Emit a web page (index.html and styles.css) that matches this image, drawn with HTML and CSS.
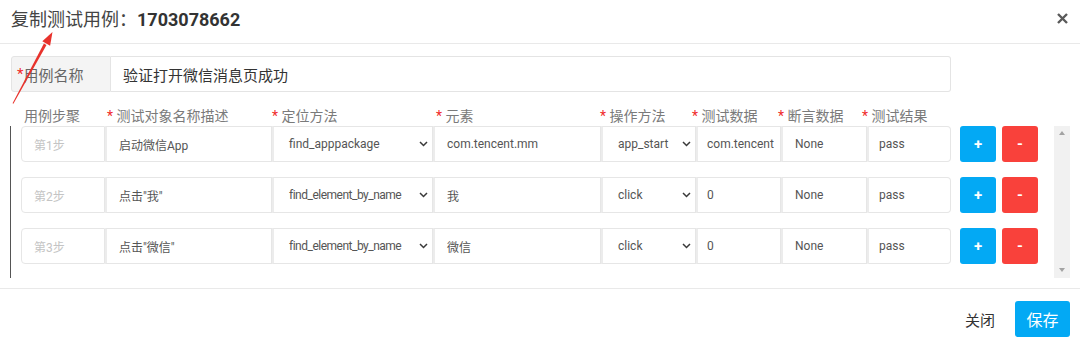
FILE: index.html
```html
<!DOCTYPE html>
<html lang="zh-CN">
<head>
    <meta charset="UTF-8">
    <meta name="viewport" content="width=device-width, initial-scale=1.0">
    <title>复制测试用例</title>
    <link rel="stylesheet" href="styles.css">
</head>
<body>
    <div class="modal">
        <div class="modal-header">
            <h4 class="modal-title">复制测试用例：<b>1703078662</b></h4>
            <button class="close" type="button">
                <svg width="11" height="11" viewBox="0 0 11 11" stroke="currentColor" stroke-width="2.4" stroke-linecap="butt">
                    <path d="M1 1L10 10M10 1L1 10"></path>
                </svg>
            </button>
        </div>

        <div class="modal-body">
            <div class="name-group">
                <span class="addon"><i class="req">*</i>用例名称</span>
                <div class="name-input">验证打开微信消息页成功</div>
            </div>

            <div class="step-labels">
                <span>用例步聚</span>
                <span><i class="req">*</i> 测试对象名称描述</span>
                <span><i class="req">*</i> 定位方法</span>
                <span><i class="req">*</i> 元素</span>
                <span><i class="req">*</i> 操作方法</span>
                <span><i class="req">*</i> 测试数据</span>
                <span><i class="req">*</i> 断言数据</span>
                <span><i class="req">*</i> 测试结果</span>
            </div>

            <div class="steps-wrap">
                <div class="steps">
                    <div class="step-row">
                        <div class="cells">
                            <div class="cell step-no">第1步</div>
                            <div class="cell">启动微信App</div>
                            <div class="cell select"><span>find_apppackage</span><svg class="chevron" width="9" height="6" viewBox="0 0 9 6"><path d="M1 1L4.5 4.5L8 1"></path></svg></div>
                            <div class="cell">com.tencent.mm</div>
                            <div class="cell select"><span>app_start</span><svg class="chevron" width="9" height="6" viewBox="0 0 9 6"><path d="M1 1L4.5 4.5L8 1"></path></svg></div>
                            <div class="cell data">com.tencent</div>
                            <div class="cell">None</div>
                            <div class="cell last">pass</div>
                        </div>
                        <button class="btn btn-add" type="button">+</button>
                        <button class="btn btn-del" type="button">-</button>
                    </div>
                    <div class="step-row">
                        <div class="cells">
                            <div class="cell step-no">第2步</div>
                            <div class="cell">点击"我"</div>
                            <div class="cell select"><span class="long">find_element_by_name</span><svg class="chevron" width="9" height="6" viewBox="0 0 9 6"><path d="M1 1L4.5 4.5L8 1"></path></svg></div>
                            <div class="cell">我</div>
                            <div class="cell select"><span>click</span><svg class="chevron" width="9" height="6" viewBox="0 0 9 6"><path d="M1 1L4.5 4.5L8 1"></path></svg></div>
                            <div class="cell data">0</div>
                            <div class="cell">None</div>
                            <div class="cell last">pass</div>
                        </div>
                        <button class="btn btn-add" type="button">+</button>
                        <button class="btn btn-del" type="button">-</button>
                    </div>
                    <div class="step-row">
                        <div class="cells">
                            <div class="cell step-no">第3步</div>
                            <div class="cell">点击"微信"</div>
                            <div class="cell select"><span class="long">find_element_by_name</span><svg class="chevron" width="9" height="6" viewBox="0 0 9 6"><path d="M1 1L4.5 4.5L8 1"></path></svg></div>
                            <div class="cell">微信</div>
                            <div class="cell select"><span>click</span><svg class="chevron" width="9" height="6" viewBox="0 0 9 6"><path d="M1 1L4.5 4.5L8 1"></path></svg></div>
                            <div class="cell data">0</div>
                            <div class="cell">None</div>
                            <div class="cell last">pass</div>
                        </div>
                        <button class="btn btn-add" type="button">+</button>
                        <button class="btn btn-del" type="button">-</button>
                    </div>
                </div>
                <div class="scrollbar">
                    <span class="arrow arrow-up"></span>
                    <span class="arrow arrow-down"></span>
                </div>
            </div>
        </div>

        <div class="modal-footer">
            <button class="btn-close" type="button">关闭</button>
            <button class="btn-save" type="button">保存</button>
        </div>

        <!-- red annotation arrow drawn over the screenshot -->
        <svg class="annotation" width="60" height="110" viewBox="0 0 60 110">
            <polygon points="12.6,103.2 13.4,103.7 46.5,45 43.9,43.5" fill="#e8322c"></polygon>
            <polygon points="52.5,32 50.1,45.7 42.3,41.3" fill="#e8322c"></polygon>
        </svg>
    </div>
</body>
</html>
```

FILE: styles.css
```css
body {
    margin: 0;
    padding: 0;
    background: #fff;
    font-family: Roboto, "Noto Sans CJK SC", sans-serif;
    color: #555;
}
.modal {
    position: relative;
    width: 1080px;
    height: 342px;
    background: #fff;
}
.modal-header {
    height: 44px;
    display: flex;
    align-items: center;
    justify-content: space-between;
    padding: 0 12px 3px 11px;
    box-sizing: border-box;
    border-bottom: 1px solid #e9e9e9;
}
.modal-title {
    margin: 0;
    font-size: 18px;
    font-weight: normal;
    color: #444;
    line-height: 24px;
}
.modal-title b {
    font-weight: bold;
    color: #333;
}
.close {
    background: none;
    border: none;
    padding: 0;
    color: #5a5a5a;
    display: flex;
    margin-top: -4px;
}
.modal-body {
    padding: 12px 0 0 10px;
}
.req {
    font-style: normal;
    color: #f02a2a;
}
.name-group {
    display: flex;
    height: 36px;
    margin-left: 1px;
    width: 940px;
}
.addon {
    width: 100px;
    box-sizing: border-box;
    background: #f4f4f4;
    border: 1px solid #e4e4e4;
    border-radius: 3px 0 0 3px;
    padding-left: 5px;
    display: flex;
    align-items: center;
    font-size: 15px;
    color: #666;
}
.name-input {
    flex: 1;
    box-sizing: border-box;
    border: 1px solid #e4e4e4;
    border-left: none;
    border-radius: 0 3px 3px 0;
    padding-left: 12px;
    display: flex;
    align-items: center;
    font-size: 15px;
    color: #333;
}
.step-labels {
    display: grid;
    grid-template-columns: 83px 165px 164px 164px 92px 86px 84px auto;
    margin: 14px 0 0 14px;
    height: 20px;
    line-height: 20px;
    font-size: 14px;
    color: #7a7a7a;
}
.steps-wrap {
    display: flex;
}
.steps {
    border-left: 1px solid #555;
    padding: 0 16px 14px 10px;
    display: flex;
    flex-direction: column;
    gap: 15px;
}
.step-row {
    display: flex;
    align-items: stretch;
    height: 36px;
}
.cells {
    display: grid;
    grid-template-columns: 84px 167px 161px 168px 95px 85px 86px 84px;
}
.cell {
    box-sizing: border-box;
    border: 1px solid #e6e6e6;
    display: flex;
    align-items: center;
    padding-left: 12px;
    font-size: 12px;
    color: #555;
    white-space: nowrap;
    overflow: hidden;
}
.cell + .cell {
    border-left-width: 2px;
    border-left-color: #ececec;
}
.step-no {
    color: #c4c4c4;
    border-radius: 4px 0 0 4px;
}
.last {
    border-radius: 0 4px 4px 0;
    padding-left: 10px;
}
.data {
    padding-left: 9px;
}
.select {
    justify-content: space-between;
    padding-left: 15px;
    padding-right: 4px;
}
.select .long {
    letter-spacing: -0.5px;
}
.chevron {
    fill: none;
    stroke: #3a3a3a;
    stroke-width: 1.5;
}
.btn {
    width: 36px;
    border: none;
    border-radius: 3px;
    color: #fff;
    font-family: Roboto, sans-serif;
    font-size: 15px;
    font-weight: bold;
    padding: 0;
}
.btn-add {
    background: #03a9f4;
    margin-left: 9px;
}
.btn-del {
    background: #f9413b;
    margin-left: 6px;
}
.scrollbar {
    width: 16px;
    background: #f1f1f1;
    display: flex;
    flex-direction: column;
    justify-content: space-between;
    align-items: center;
    padding: 5px 0 6px;
    box-sizing: border-box;
}
.arrow {
    width: 0;
    height: 0;
    border-left: 3.5px solid transparent;
    border-right: 3.5px solid transparent;
}
.arrow-up {
    border-bottom: 4px solid #a3a3a3;
}
.arrow-down {
    border-top: 4px solid #a3a3a3;
}
.modal-footer {
    margin-top: 10px;
    border-top: 1px solid #e9e9e9;
    padding: 12px 10px 0 0;
    display: flex;
    justify-content: flex-end;
    gap: 6px;
}
.btn-close {
    height: 36px;
    padding: 0 14px 0 12px;
    background: none;
    border: none;
    font-family: Roboto, "Noto Sans CJK SC", sans-serif;
    font-size: 15px;
    color: #333;
}
.btn-save {
    width: 55px;
    height: 36px;
    background: #03a9f4;
    border: none;
    border-radius: 3px;
    color: #fff;
    font-family: Roboto, "Noto Sans CJK SC", sans-serif;
    font-size: 16px;
}
.annotation {
    position: absolute;
    left: 0;
    top: 0;
    pointer-events: none;
}
```
